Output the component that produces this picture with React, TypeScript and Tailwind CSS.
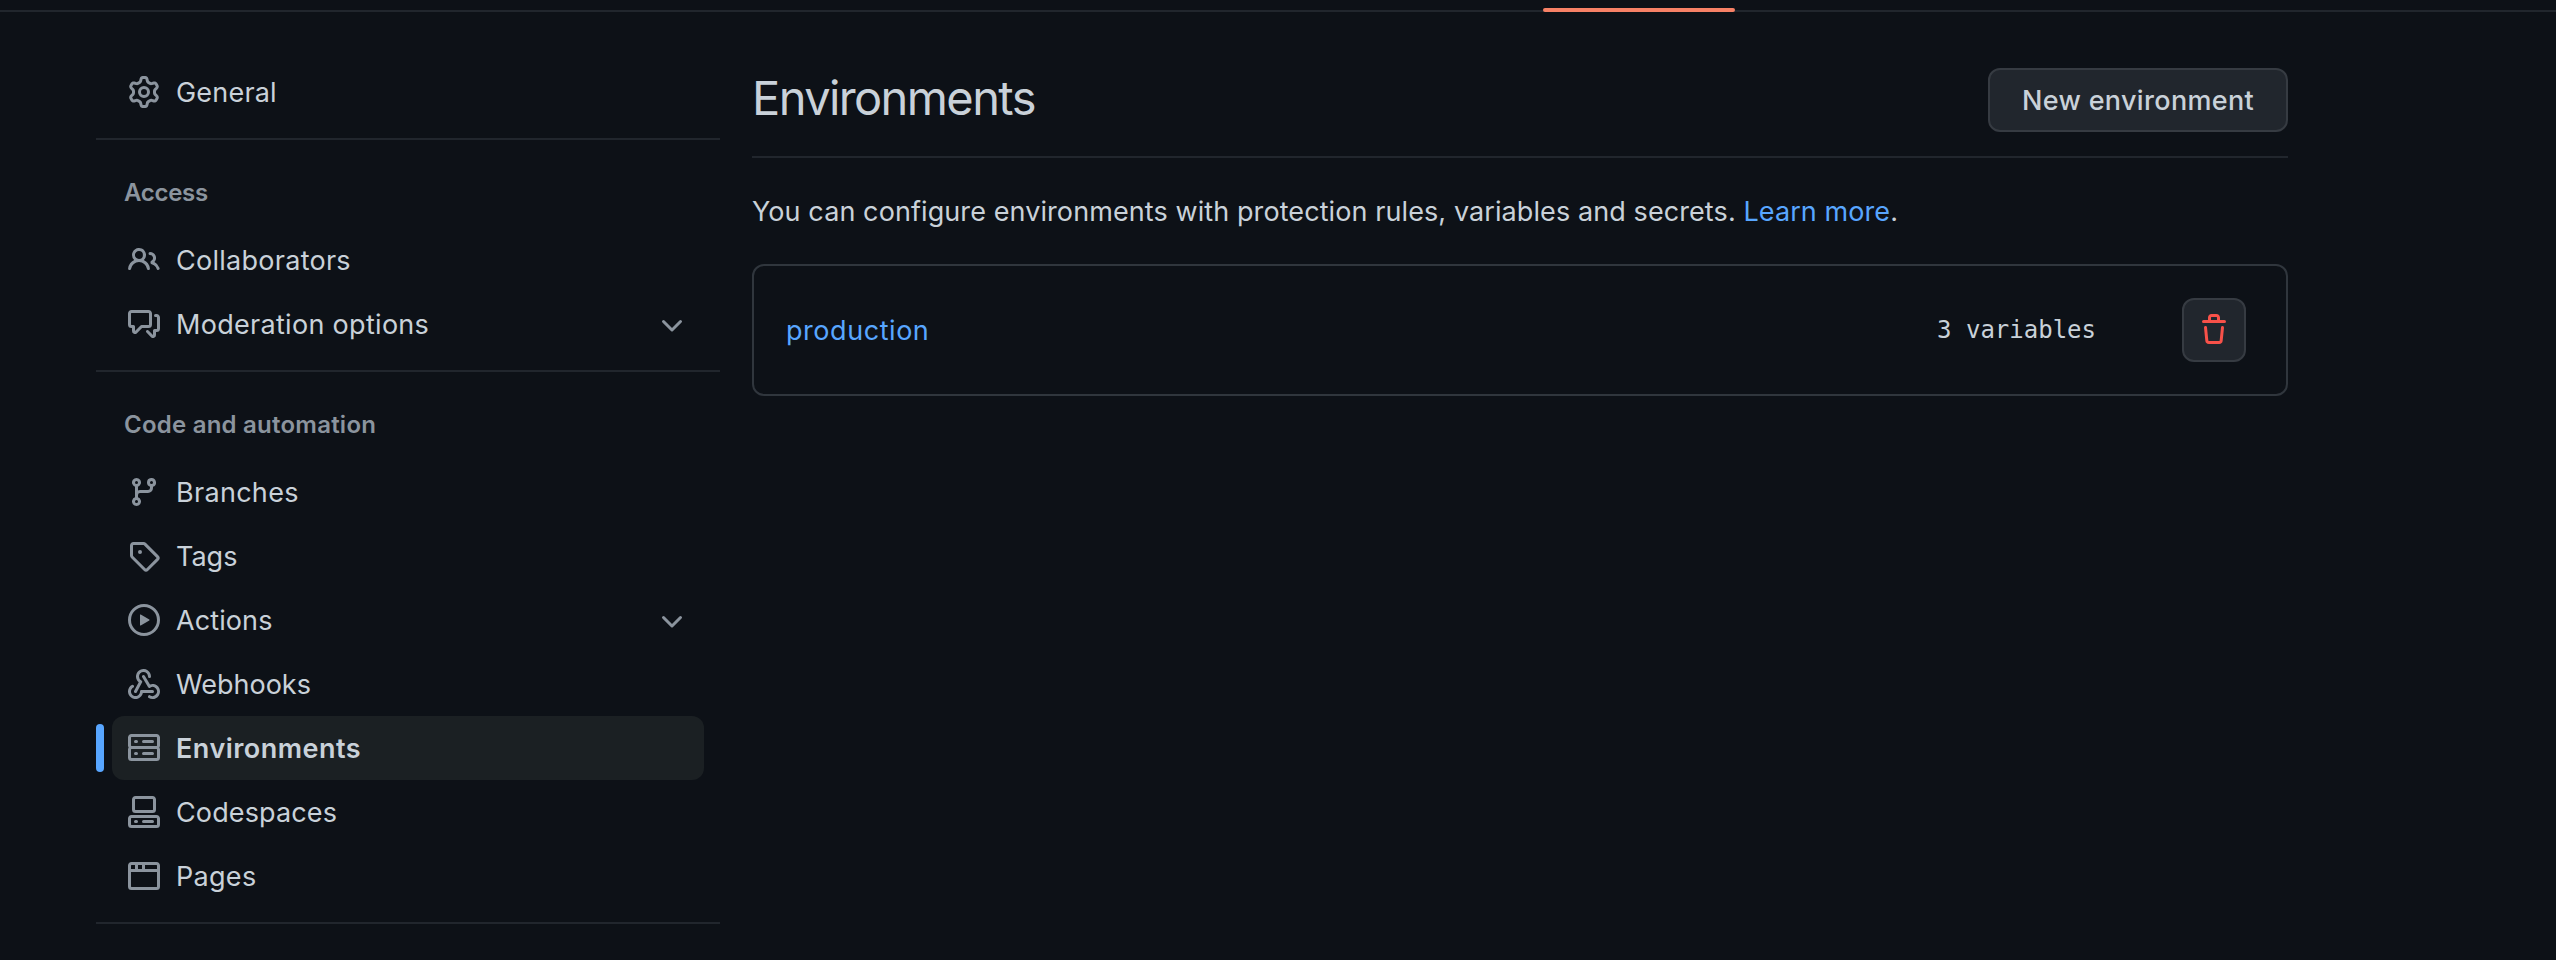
const ICONS = {
  gear: "M8 0a8.2 8.2 0 0 1 .701.031C9.444.095 9.99.645 10.16 1.29l.288 1.107c.018.066.079.158.212.224.231.114.454.243.668.386.123.082.233.09.299.071l1.103-.303c.644-.176 1.392.021 1.82.63.27.385.506.792.704 1.218.315.675.111 1.422-.364 1.891l-.814.806c-.049.048-.098.147-.088.294.016.257.016.515 0 .772-.01.147.038.246.088.294l.814.806c.475.469.679 1.216.364 1.891a7.977 7.977 0 0 1-.704 1.217c-.428.61-1.176.807-1.82.63l-1.102-.302c-.067-.019-.177-.011-.3.071a5.909 5.909 0 0 1-.668.386c-.133.066-.194.158-.211.224l-.29 1.106c-.168.646-.715 1.196-1.458 1.26a8.006 8.006 0 0 1-1.402 0c-.743-.064-1.289-.614-1.458-1.26l-.289-1.106c-.018-.066-.079-.158-.212-.224a5.738 5.738 0 0 1-.668-.386c-.123-.082-.233-.09-.299-.071l-1.103.303c-.644.176-1.392-.021-1.82-.63a8.12 8.12 0 0 1-.704-1.218c-.315-.675-.111-1.422.363-1.891l.815-.806c.05-.048.098-.147.088-.294a6.214 6.214 0 0 1 0-.772c.01-.147-.038-.246-.088-.294l-.815-.806C.635 6.045.431 5.298.746 4.623a7.92 7.92 0 0 1 .704-1.217c.428-.61 1.176-.807 1.82-.63l1.102.302c.067.019.177.011.3-.071.214-.143.437-.272.668-.386.133-.066.194-.158.211-.224l.29-1.106C6.009.645 6.556.095 7.299.03 7.53.01 7.764 0 8 0Zm-.571 1.525c-.036.003-.108.036-.137.146l-.289 1.105c-.147.561-.549.967-.998 1.189-.173.086-.34.183-.5.29-.417.278-.97.423-1.529.27l-1.103-.303c-.109-.03-.175.016-.195.045-.22.312-.412.644-.573.99-.014.031-.021.11.059.19l.815.806c.411.406.562.957.53 1.456a4.709 4.709 0 0 0 0 .582c.032.499-.119 1.05-.53 1.456l-.815.806c-.081.08-.073.159-.059.19.162.346.353.677.573.989.02.03.085.076.195.046l1.102-.303c.56-.153 1.113-.008 1.53.27.161.107.328.204.501.29.447.222.85.629.997 1.189l.289 1.105c.029.109.101.143.137.146a6.6 6.6 0 0 0 1.142 0c.036-.003.108-.036.137-.146l.289-1.105c.147-.561.549-.967.998-1.189.173-.086.34-.183.5-.29.417-.278.97-.423 1.529-.27l1.103.303c.109.029.175-.016.195-.045.22-.313.411-.644.573-.99.014-.031.021-.11-.059-.19l-.815-.806c-.411-.406-.562-.957-.53-1.456a4.709 4.709 0 0 0 0-.582c-.032-.499.119-1.05.53-1.456l.815-.806c.081-.08.073-.159.059-.19a6.464 6.464 0 0 0-.573-.989c-.02-.03-.085-.076-.195-.046l-1.102.303c-.56.153-1.113.008-1.53-.27a4.44 4.44 0 0 0-.501-.29c-.447-.222-.85-.629-.997-1.189l-.289-1.105c-.029-.11-.101-.143-.137-.146a6.6 6.6 0 0 0-1.142 0ZM11 8a3 3 0 1 1-6 0 3 3 0 0 1 6 0ZM9.5 8a1.5 1.5 0 1 0-3.001.001A1.5 1.5 0 0 0 9.5 8Z",
  people: "M2 5.5a3.5 3.5 0 1 1 5.898 2.549 5.508 5.508 0 0 1 3.034 4.084.75.75 0 1 1-1.482.235 4 4 0 0 0-7.9 0 .75.75 0 0 1-1.482-.236A5.507 5.507 0 0 1 3.102 8.05 3.493 3.493 0 0 1 2 5.5ZM11 4a3.001 3.001 0 0 1 2.22 5.018 5.01 5.01 0 0 1 2.56 3.012.749.749 0 0 1-.885.954.752.752 0 0 1-.549-.514 3.507 3.507 0 0 0-2.522-2.372.75.75 0 0 1-.574-.73v-.352a.75.75 0 0 1 .416-.672A1.5 1.5 0 0 0 11 5.5.75.75 0 0 1 11 4Zm-5.5-.5a2 2 0 1 0-.001 3.999A2 2 0 0 0 5.5 3.5Z",
  discussion: "M1.75 1h8.5c.966 0 1.75.784 1.75 1.75v5.5A1.75 1.75 0 0 1 10.25 10H7.061l-2.574 2.573A1.458 1.458 0 0 1 2 11.543V10h-.25A1.75 1.75 0 0 1 0 8.25v-5.5C0 1.784.784 1 1.75 1ZM1.5 2.75v5.5c0 .138.112.25.25.25h1a.75.75 0 0 1 .75.75v2.19l2.72-2.72a.749.749 0 0 1 .53-.22h3.5a.25.25 0 0 0 .25-.25v-5.5a.25.25 0 0 0-.25-.25h-8.5a.25.25 0 0 0-.25.25Zm13 2a.25.25 0 0 0-.25-.25h-.5a.75.75 0 0 1 0-1.5h.5c.966 0 1.75.784 1.75 1.75v5.5A1.75 1.75 0 0 1 14.25 12H14v1.543a1.458 1.458 0 0 1-2.487 1.03L9.22 12.28a.749.749 0 0 1 .326-1.275.749.749 0 0 1 .734.215l2.22 2.22v-2.19a.75.75 0 0 1 .75-.75h1a.25.25 0 0 0 .25-.25Z",
  branch: "M9.5 3.25a2.25 2.25 0 1 1 3 2.122V6A2.5 2.5 0 0 1 10 8.5H6a1 1 0 0 0-1 1v1.128a2.251 2.251 0 1 1-1.5 0V5.372a2.25 2.25 0 1 1 1.5 0v1.836A2.493 2.493 0 0 1 6 7h4a1 1 0 0 0 1-1v-.628A2.25 2.25 0 0 1 9.5 3.25Zm-6 0a.75.75 0 1 0 1.5 0 .75.75 0 0 0-1.5 0Zm8.25-.75a.75.75 0 1 0 0 1.5.75.75 0 0 0 0-1.5ZM4.25 12a.75.75 0 1 0 0 1.5.75.75 0 0 0 0-1.5Z",
  tag: "M1 7.775V2.75C1 1.784 1.784 1 2.75 1h5.025c.464 0 .91.184 1.238.513l6.25 6.25a1.75 1.75 0 0 1 0 2.474l-5.026 5.026a1.75 1.75 0 0 1-2.474 0l-6.25-6.25A1.752 1.752 0 0 1 1 7.775Zm1.5 0c0 .066.026.13.073.177l6.25 6.25a.25.25 0 0 0 .354 0l5.025-5.025a.25.25 0 0 0 0-.354l-6.25-6.25a.25.25 0 0 0-.177-.073H2.75a.25.25 0 0 0-.25.25ZM6 5a1 1 0 1 1 0 2 1 1 0 0 1 0-2Z",
  play: "M8 0a8 8 0 1 1 0 16A8 8 0 0 1 8 0ZM1.5 8a6.5 6.5 0 1 0 13 0 6.5 6.5 0 0 0-13 0Zm4.879-2.773 4.264 2.559a.25.25 0 0 1 0 .428l-4.264 2.559A.25.25 0 0 1 6 10.559V5.442a.25.25 0 0 1 .379-.215Z",
  webhook: "M5.5 4.25a2.25 2.25 0 0 1 4.5 0 .75.75 0 0 0 1.5 0 3.75 3.75 0 1 0-6.14 2.889l-2.272 4.258a.75.75 0 0 0 1.324.706L7 7.25a.75.75 0 0 0-.309-1.015A2.25 2.25 0 0 1 5.5 4.25ZM7.364 3.607a.75.75 0 0 1 1.03.257l2.608 4.349a3.75 3.75 0 1 1-.628 6.785.75.75 0 0 1 .752-1.299 2.25 2.25 0 1 0-.033-3.88.75.75 0 0 1-1.03-.256L7.107 4.636a.75.75 0 0 1 .257-1.03ZM2.9 8.776A.75.75 0 0 1 2.625 9.8 2.25 2.25 0 1 0 6 11.75a.75.75 0 0 1 .75-.751h5.5a.75.75 0 0 1 0 1.5H7.425a3.751 3.751 0 1 1-5.55-3.998.75.75 0 0 1 1.024.274Z",
  server: "M1.75 1h12.5c.966 0 1.75.784 1.75 1.75v4c0 .372-.116.717-.314 1 .198.283.314.628.314 1v4a1.75 1.75 0 0 1-1.75 1.75H1.75A1.75 1.75 0 0 1 0 12.75v-4c0-.358.109-.707.314-1a1.739 1.739 0 0 1-.314-1v-4C0 1.784.784 1 1.75 1ZM1.5 2.75v4c0 .138.112.25.25.25h12.5a.25.25 0 0 0 .25-.25v-4a.25.25 0 0 0-.25-.25H1.75a.25.25 0 0 0-.25.25Zm.25 5.75a.25.25 0 0 0-.25.25v4c0 .138.112.25.25.25h12.5a.25.25 0 0 0 .25-.25v-4a.25.25 0 0 0-.25-.25ZM7 4.75A.75.75 0 0 1 7.75 4h4.5a.75.75 0 0 1 0 1.5h-4.5A.75.75 0 0 1 7 4.75ZM7.75 10h4.5a.75.75 0 0 1 0 1.5h-4.5a.75.75 0 0 1 0-1.5ZM3 4.75A.75.75 0 0 1 3.75 4h.5a.75.75 0 0 1 0 1.5h-.5A.75.75 0 0 1 3 4.75ZM3.75 10h.5a.75.75 0 0 1 0 1.5h-.5a.75.75 0 0 1 0-1.5Z",
  codespaces: "M0 11.25c0-.966.784-1.75 1.75-1.75h12.5c.966 0 1.75.784 1.75 1.75v3A1.75 1.75 0 0 1 14.25 16H1.75A1.75 1.75 0 0 1 0 14.25Zm2-9.5C2 .784 2.784 0 3.75 0h8.5C13.216 0 14 .784 14 1.75v5a1.75 1.75 0 0 1-1.75 1.75h-8.5A1.75 1.75 0 0 1 2 6.75Zm1.75-.25a.25.25 0 0 0-.25.25v5c0 .138.112.25.25.25h8.5a.25.25 0 0 0 .25-.25v-5a.25.25 0 0 0-.25-.25Zm-2 9.5a.25.25 0 0 0-.25.25v3c0 .138.112.25.25.25h12.5a.25.25 0 0 0 .25-.25v-3a.25.25 0 0 0-.25-.25ZM7 12.75a.75.75 0 0 1 .75-.75h4.5a.75.75 0 0 1 0 1.5h-4.5a.75.75 0 0 1-.75-.75Zm-4 0a.75.75 0 0 1 .75-.75h.5a.75.75 0 0 1 0 1.5h-.5a.75.75 0 0 1-.75-.75Z",
  browser: "M0 2.75C0 1.784.784 1 1.75 1h12.5c.966 0 1.75.784 1.75 1.75v10.5A1.75 1.75 0 0 1 14.25 15H1.75A1.75 1.75 0 0 1 0 13.25ZM14.5 6h-13v7.25c0 .138.112.25.25.25h12.5a.25.25 0 0 0 .25-.25Zm-6-3.5v2h6V2.75a.25.25 0 0 0-.25-.25ZM5 2.5v2h2v-2Zm-3.25 0a.25.25 0 0 0-.25.25V4.5h2v-2Z",
  trash: "M11 1.75V3h2.25a.75.75 0 0 1 0 1.5H2.75a.75.75 0 0 1 0-1.5H5V1.75C5 .784 5.784 0 6.75 0h2.5C10.216 0 11 .784 11 1.75ZM4.496 6.675l.66 6.6a.25.25 0 0 0 .249.225h5.19a.25.25 0 0 0 .249-.225l.66-6.6a.75.75 0 0 1 1.492.149l-.66 6.6A1.748 1.748 0 0 1 10.595 15h-5.19a1.75 1.75 0 0 1-1.741-1.575l-.66-6.6a.75.75 0 1 1 1.492-.15ZM6.5 1.75V3h3V1.75a.25.25 0 0 0-.25-.25h-2.5a.25.25 0 0 0-.25.25Z",
  chevron: "M12.78 5.22a.749.749 0 0 1 0 1.06l-4.25 4.25a.749.749 0 0 1-1.06 0L3.22 6.28a.749.749 0 1 1 1.06-1.06L8 8.939l3.72-3.719a.749.749 0 0 1 1.06 0Z",
};
type IconName = keyof typeof ICONS;

function Icon({ name, className = "" }: { name: IconName; className?: string }) {
  return (
    <svg viewBox="0 0 16 16" className={`size-8 shrink-0 fill-current ${className}`} aria-hidden="true">
      <path d={ICONS[name]} />
    </svg>
  );
}

type Item = { label: string; icon: IconName; expandable?: boolean; active?: boolean; tracking?: string };

function NavItem({ label, icon, expandable, active, tracking = "" }: Item) {
  return (
    <li className="relative mx-4">
      {active && <span className="absolute top-2 -left-4 h-12 w-2 rounded-md bg-[#58a6ff]" />}
      <a href="#" className={`flex h-16 items-center rounded-xl px-4 ${active ? "bg-[#1b2023] font-semibold" : ""}`}>
        <Icon name={icon} className="text-[#8b949e]" />
        <span className={`ml-4 pt-0.5 ${tracking}`}>{label}</span>
        {expandable && <Icon name="chevron" className="mt-1 ml-auto text-[#8b949e]" />}
      </a>
    </li>
  );
}

const groups: { title?: string; titleTracking?: string; items: Item[] }[] = [
  { items: [{ label: "General", icon: "gear", tracking: "tracking-[0.2px]" }] },
  {
    title: "Access",
    titleTracking: "tracking-[-0.3px]",
    items: [
      { label: "Collaborators", icon: "people", tracking: "tracking-[0.27px]" },
      { label: "Moderation options", icon: "discussion", expandable: true, tracking: "tracking-[0.3px]" },
    ],
  },
  {
    title: "Code and automation",
    titleTracking: "tracking-[0.23px]",
    items: [
      { label: "Branches", icon: "branch", tracking: "tracking-[0.3px]" },
      { label: "Tags", icon: "tag" },
      { label: "Actions", icon: "play", expandable: true, tracking: "tracking-[0.1px]" },
      { label: "Webhooks", icon: "webhook" },
      { label: "Environments", icon: "server", active: true, tracking: "tracking-[0.48px]" },
      { label: "Codespaces", icon: "codespaces", tracking: "tracking-[0.12px]" },
      { label: "Pages", icon: "browser", tracking: "tracking-[0.3px]" },
    ],
  },
];

export default function App() {
  return (
    <div className="flex h-[960px] w-[2556px] flex-col overflow-hidden bg-[#0d1117] font-['Inter',sans-serif] text-[27px] leading-[42px] text-[#c9d1d9]">
      <div className="flex h-3 shrink-0 items-end border-b-2 border-[#21262d] pl-[1543px]">
        <div className="z-10 -mb-0.5 h-1 w-48 rounded-md bg-[#f78166]" />
      </div>
      <div className="flex gap-8 pl-24">
        <nav className="w-[624px] pt-12">
          {groups.map((group, i) => (
            <ul key={i} className="border-b-2 border-[#21262d] pb-3.5">
              {group.title && (
                <li className={`px-7 pt-8 pb-3.5 text-2xl leading-[42px] font-semibold text-[#8b949e] ${group.titleTracking}`}>
                  {group.title}
                </li>
              )}
              {group.items.map((item) => (
                <NavItem key={item.label} {...item} />
              ))}
            </ul>
          ))}
        </nav>
        <main className="w-[1536px] pt-14">
          <header className="flex h-[90px] items-start justify-between border-b-2 border-[#21262d]">
            <h1 className="text-[47px] leading-[60px] tracking-[-1.6px]">Environments</h1>
            <button className="h-16 w-[300px] rounded-xl border-2 border-[#363b42] bg-[#21262d] pt-0.5 font-medium tracking-[0.33px]">
              New environment
            </button>
          </header>
          <p className="mt-[33px] tracking-[0.09px]">
            You can configure environments with protection rules, variables and secrets.{" "}
            <a href="#" className="text-[#58a6ff]">Learn more</a>.
          </p>
          <section className="mt-[31px] flex h-[132px] items-center rounded-xl border-2 border-[#30363d] pr-10 pl-8">
            <a href="#" className="pt-0.5 tracking-[0.55px] text-[#58a6ff]">production</a>
            <span className="mr-[86px] ml-auto font-['DejaVu_Sans_Mono',monospace] text-2xl">3 variables</span>
            <button
              className="flex size-16 items-center justify-center rounded-xl border-2 border-[#363b42] bg-[#21262d] text-[#f85149]"
              aria-label="Delete environment"
            >
              <Icon name="trash" />
            </button>
          </section>
        </main>
      </div>
    </div>
  );
}
